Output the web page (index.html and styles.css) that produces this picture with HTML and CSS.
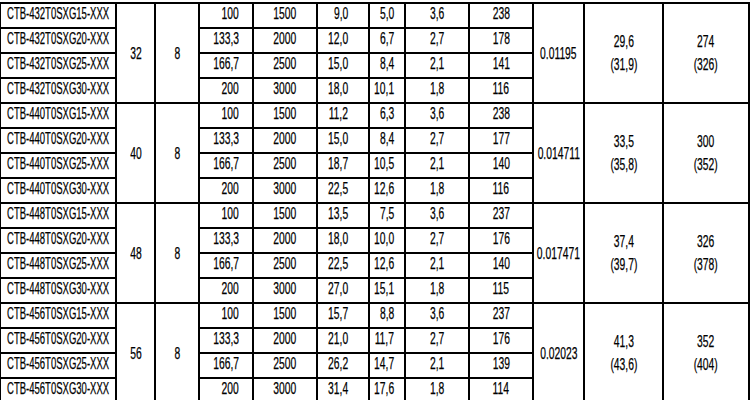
FILE: index.html
```html
<!DOCTYPE html>
<html>
<head>
<meta charset="utf-8">
<link rel="stylesheet" href="styles.css">
</head>
<body>
<table class="spec">
<colgroup>
<col class="w-pn"><col class="w-a"><col class="w-b"><col class="w-c"><col class="w-d"><col class="w-e"><col class="w-f"><col class="w-g"><col class="w-h"><col class="w-i"><col class="w-j"><col class="w-k">
</colgroup>
<tbody>
<tr class="grp">
<td class="pn"><span class="t">CTB-432T0SXG15-XXX</span></td>
<td class="m" rowspan="4"><span class="n">32</span></td>
<td class="m" rowspan="4"><span class="n">8</span></td>
<td class="r1"><span class="n">100</span></td><td class="c"><span class="n">1500</span></td><td class="r2"><span class="n">9,0</span></td><td class="r3"><span class="n">5,0</span></td><td class="c"><span class="n">3,6</span></td><td class="c"><span class="n">238</span></td>
<td class="m" rowspan="4"><span class="n">0.01195</span></td>
<td class="m2" rowspan="4"><span class="n">29,6<br>(31,9)</span></td>
<td class="m2" rowspan="4"><span class="n">274<br>(326)</span></td>
</tr>
<tr><td class="pn"><span class="t">CTB-432T0SXG20-XXX</span></td><td class="r1"><span class="n">133,3</span></td><td class="c"><span class="n">2000</span></td><td class="r2"><span class="n">12,0</span></td><td class="r3"><span class="n">6,7</span></td><td class="c"><span class="n">2,7</span></td><td class="c"><span class="n">178</span></td></tr>
<tr><td class="pn"><span class="t">CTB-432T0SXG25-XXX</span></td><td class="r1"><span class="n">166,7</span></td><td class="c"><span class="n">2500</span></td><td class="r2"><span class="n">15,0</span></td><td class="r3"><span class="n">8,4</span></td><td class="c"><span class="n">2,1</span></td><td class="c"><span class="n">141</span></td></tr>
<tr><td class="pn"><span class="t">CTB-432T0SXG30-XXX</span></td><td class="r1"><span class="n">200</span></td><td class="c"><span class="n">3000</span></td><td class="r2"><span class="n">18,0</span></td><td class="r3"><span class="n">10,1</span></td><td class="c"><span class="n">1,8</span></td><td class="c"><span class="n">116</span></td></tr>

<tr class="grp">
<td class="pn"><span class="t">CTB-440T0SXG15-XXX</span></td>
<td class="m" rowspan="4"><span class="n">40</span></td>
<td class="m" rowspan="4"><span class="n">8</span></td>
<td class="r1"><span class="n">100</span></td><td class="c"><span class="n">1500</span></td><td class="r2"><span class="n">11,2</span></td><td class="r3"><span class="n">6,3</span></td><td class="c"><span class="n">3,6</span></td><td class="c"><span class="n">238</span></td>
<td class="m" rowspan="4"><span class="n">0.014711</span></td>
<td class="m2" rowspan="4"><span class="n">33,5<br>(35,8)</span></td>
<td class="m2" rowspan="4"><span class="n">300<br>(352)</span></td>
</tr>
<tr><td class="pn"><span class="t">CTB-440T0SXG20-XXX</span></td><td class="r1"><span class="n">133,3</span></td><td class="c"><span class="n">2000</span></td><td class="r2"><span class="n">15,0</span></td><td class="r3"><span class="n">8,4</span></td><td class="c"><span class="n">2,7</span></td><td class="c"><span class="n">177</span></td></tr>
<tr><td class="pn"><span class="t">CTB-440T0SXG25-XXX</span></td><td class="r1"><span class="n">166,7</span></td><td class="c"><span class="n">2500</span></td><td class="r2"><span class="n">18,7</span></td><td class="r3"><span class="n">10,5</span></td><td class="c"><span class="n">2,1</span></td><td class="c"><span class="n">140</span></td></tr>
<tr><td class="pn"><span class="t">CTB-440T0SXG30-XXX</span></td><td class="r1"><span class="n">200</span></td><td class="c"><span class="n">3000</span></td><td class="r2"><span class="n">22,5</span></td><td class="r3"><span class="n">12,6</span></td><td class="c"><span class="n">1,8</span></td><td class="c"><span class="n">116</span></td></tr>

<tr class="grp">
<td class="pn"><span class="t">CTB-448T0SXG15-XXX</span></td>
<td class="m" rowspan="4"><span class="n">48</span></td>
<td class="m" rowspan="4"><span class="n">8</span></td>
<td class="r1"><span class="n">100</span></td><td class="c"><span class="n">1500</span></td><td class="r2"><span class="n">13,5</span></td><td class="r3"><span class="n">7,5</span></td><td class="c"><span class="n">3,6</span></td><td class="c"><span class="n">237</span></td>
<td class="m" rowspan="4"><span class="n">0.017471</span></td>
<td class="m2" rowspan="4"><span class="n">37,4<br>(39,7)</span></td>
<td class="m2" rowspan="4"><span class="n">326<br>(378)</span></td>
</tr>
<tr><td class="pn"><span class="t">CTB-448T0SXG20-XXX</span></td><td class="r1"><span class="n">133,3</span></td><td class="c"><span class="n">2000</span></td><td class="r2"><span class="n">18,0</span></td><td class="r3"><span class="n">10,0</span></td><td class="c"><span class="n">2,7</span></td><td class="c"><span class="n">176</span></td></tr>
<tr><td class="pn"><span class="t">CTB-448T0SXG25-XXX</span></td><td class="r1"><span class="n">166,7</span></td><td class="c"><span class="n">2500</span></td><td class="r2"><span class="n">22,5</span></td><td class="r3"><span class="n">12,6</span></td><td class="c"><span class="n">2,1</span></td><td class="c"><span class="n">140</span></td></tr>
<tr><td class="pn"><span class="t">CTB-448T0SXG30-XXX</span></td><td class="r1"><span class="n">200</span></td><td class="c"><span class="n">3000</span></td><td class="r2"><span class="n">27,0</span></td><td class="r3"><span class="n">15,1</span></td><td class="c"><span class="n">1,8</span></td><td class="c"><span class="n">115</span></td></tr>

<tr class="grp">
<td class="pn"><span class="t">CTB-456T0SXG15-XXX</span></td>
<td class="m" rowspan="4"><span class="n">56</span></td>
<td class="m" rowspan="4"><span class="n">8</span></td>
<td class="r1"><span class="n">100</span></td><td class="c"><span class="n">1500</span></td><td class="r2"><span class="n">15,7</span></td><td class="r3"><span class="n">8,8</span></td><td class="c"><span class="n">3,6</span></td><td class="c"><span class="n">237</span></td>
<td class="m" rowspan="4"><span class="n">0.02023</span></td>
<td class="m2" rowspan="4"><span class="n">41,3<br>(43,6)</span></td>
<td class="m2" rowspan="4"><span class="n">352<br>(404)</span></td>
</tr>
<tr><td class="pn"><span class="t">CTB-456T0SXG20-XXX</span></td><td class="r1"><span class="n">133,3</span></td><td class="c"><span class="n">2000</span></td><td class="r2"><span class="n">21,0</span></td><td class="r3"><span class="n">11,7</span></td><td class="c"><span class="n">2,7</span></td><td class="c"><span class="n">176</span></td></tr>
<tr><td class="pn"><span class="t">CTB-456T0SXG25-XXX</span></td><td class="r1"><span class="n">166,7</span></td><td class="c"><span class="n">2500</span></td><td class="r2"><span class="n">26,2</span></td><td class="r3"><span class="n">14,7</span></td><td class="c"><span class="n">2,1</span></td><td class="c"><span class="n">139</span></td></tr>
<tr><td class="pn"><span class="t">CTB-456T0SXG30-XXX</span></td><td class="r1"><span class="n">200</span></td><td class="c"><span class="n">3000</span></td><td class="r2"><span class="n">31,4</span></td><td class="r3"><span class="n">17,6</span></td><td class="c"><span class="n">1,8</span></td><td class="c"><span class="n">114</span></td></tr>
</tbody>
</table>
</body>
</html>
```

FILE: styles.css
```css
html, body {
  margin: 0;
  padding: 0;
  background: #fff;
  overflow: hidden;
}
body {
  width: 750px;
  height: 400px;
  font-family: "Liberation Sans", Arial, sans-serif;
  font-size: 16px;
  color: #000;
}
.spec {
  table-layout: fixed;
  border-collapse: collapse;
  width: 749px;
  margin: 2px 0 0 -1px;
}
.w-pn { width: 116px; }
.w-a { width: 39px; }
.w-b { width: 44px; }
.w-c { width: 54px; }
.w-d { width: 64px; }
.w-e { width: 52px; }
.w-f { width: 36px; }
.w-g { width: 64px; }
.w-h { width: 64px; }
.w-i { width: 51px; }
.w-j { width: 79px; }
.w-k { width: 86px; }
.spec tr { height: 25px; }
.spec td {
  border: 2px solid #000;
  padding: 0;
  height: 23px;
  line-height: 19px;
  vertical-align: top;
  white-space: nowrap;
  overflow: visible;
}
.t, .n {
  display: inline-block;
  -webkit-text-stroke: 0.25px #000;
}
.t {
  transform: scaleX(0.595);
  transform-origin: left center;
  margin-right: -80px;
}
.n {
  transform: scaleX(0.645);
  transform-origin: center center;
  margin: 0 -30px;
}
.pn { text-align: left; padding-left: 6px !important; }
.c { text-align: center; }
.m { text-align: center; vertical-align: middle !important; }
.m2 { text-align: center; vertical-align: middle !important; line-height: 23px !important; }
.r1, .r2, .r3 { text-align: right; }
.r1 .n, .r2 .n, .r3 .n {
  transform-origin: right center;
  margin: 0 0 0 -40px;
}
.r1 { padding-right: 13px !important; }
.r2 { padding-right: 20px !important; }
.r3 { padding-right: 10px !important; }
```
